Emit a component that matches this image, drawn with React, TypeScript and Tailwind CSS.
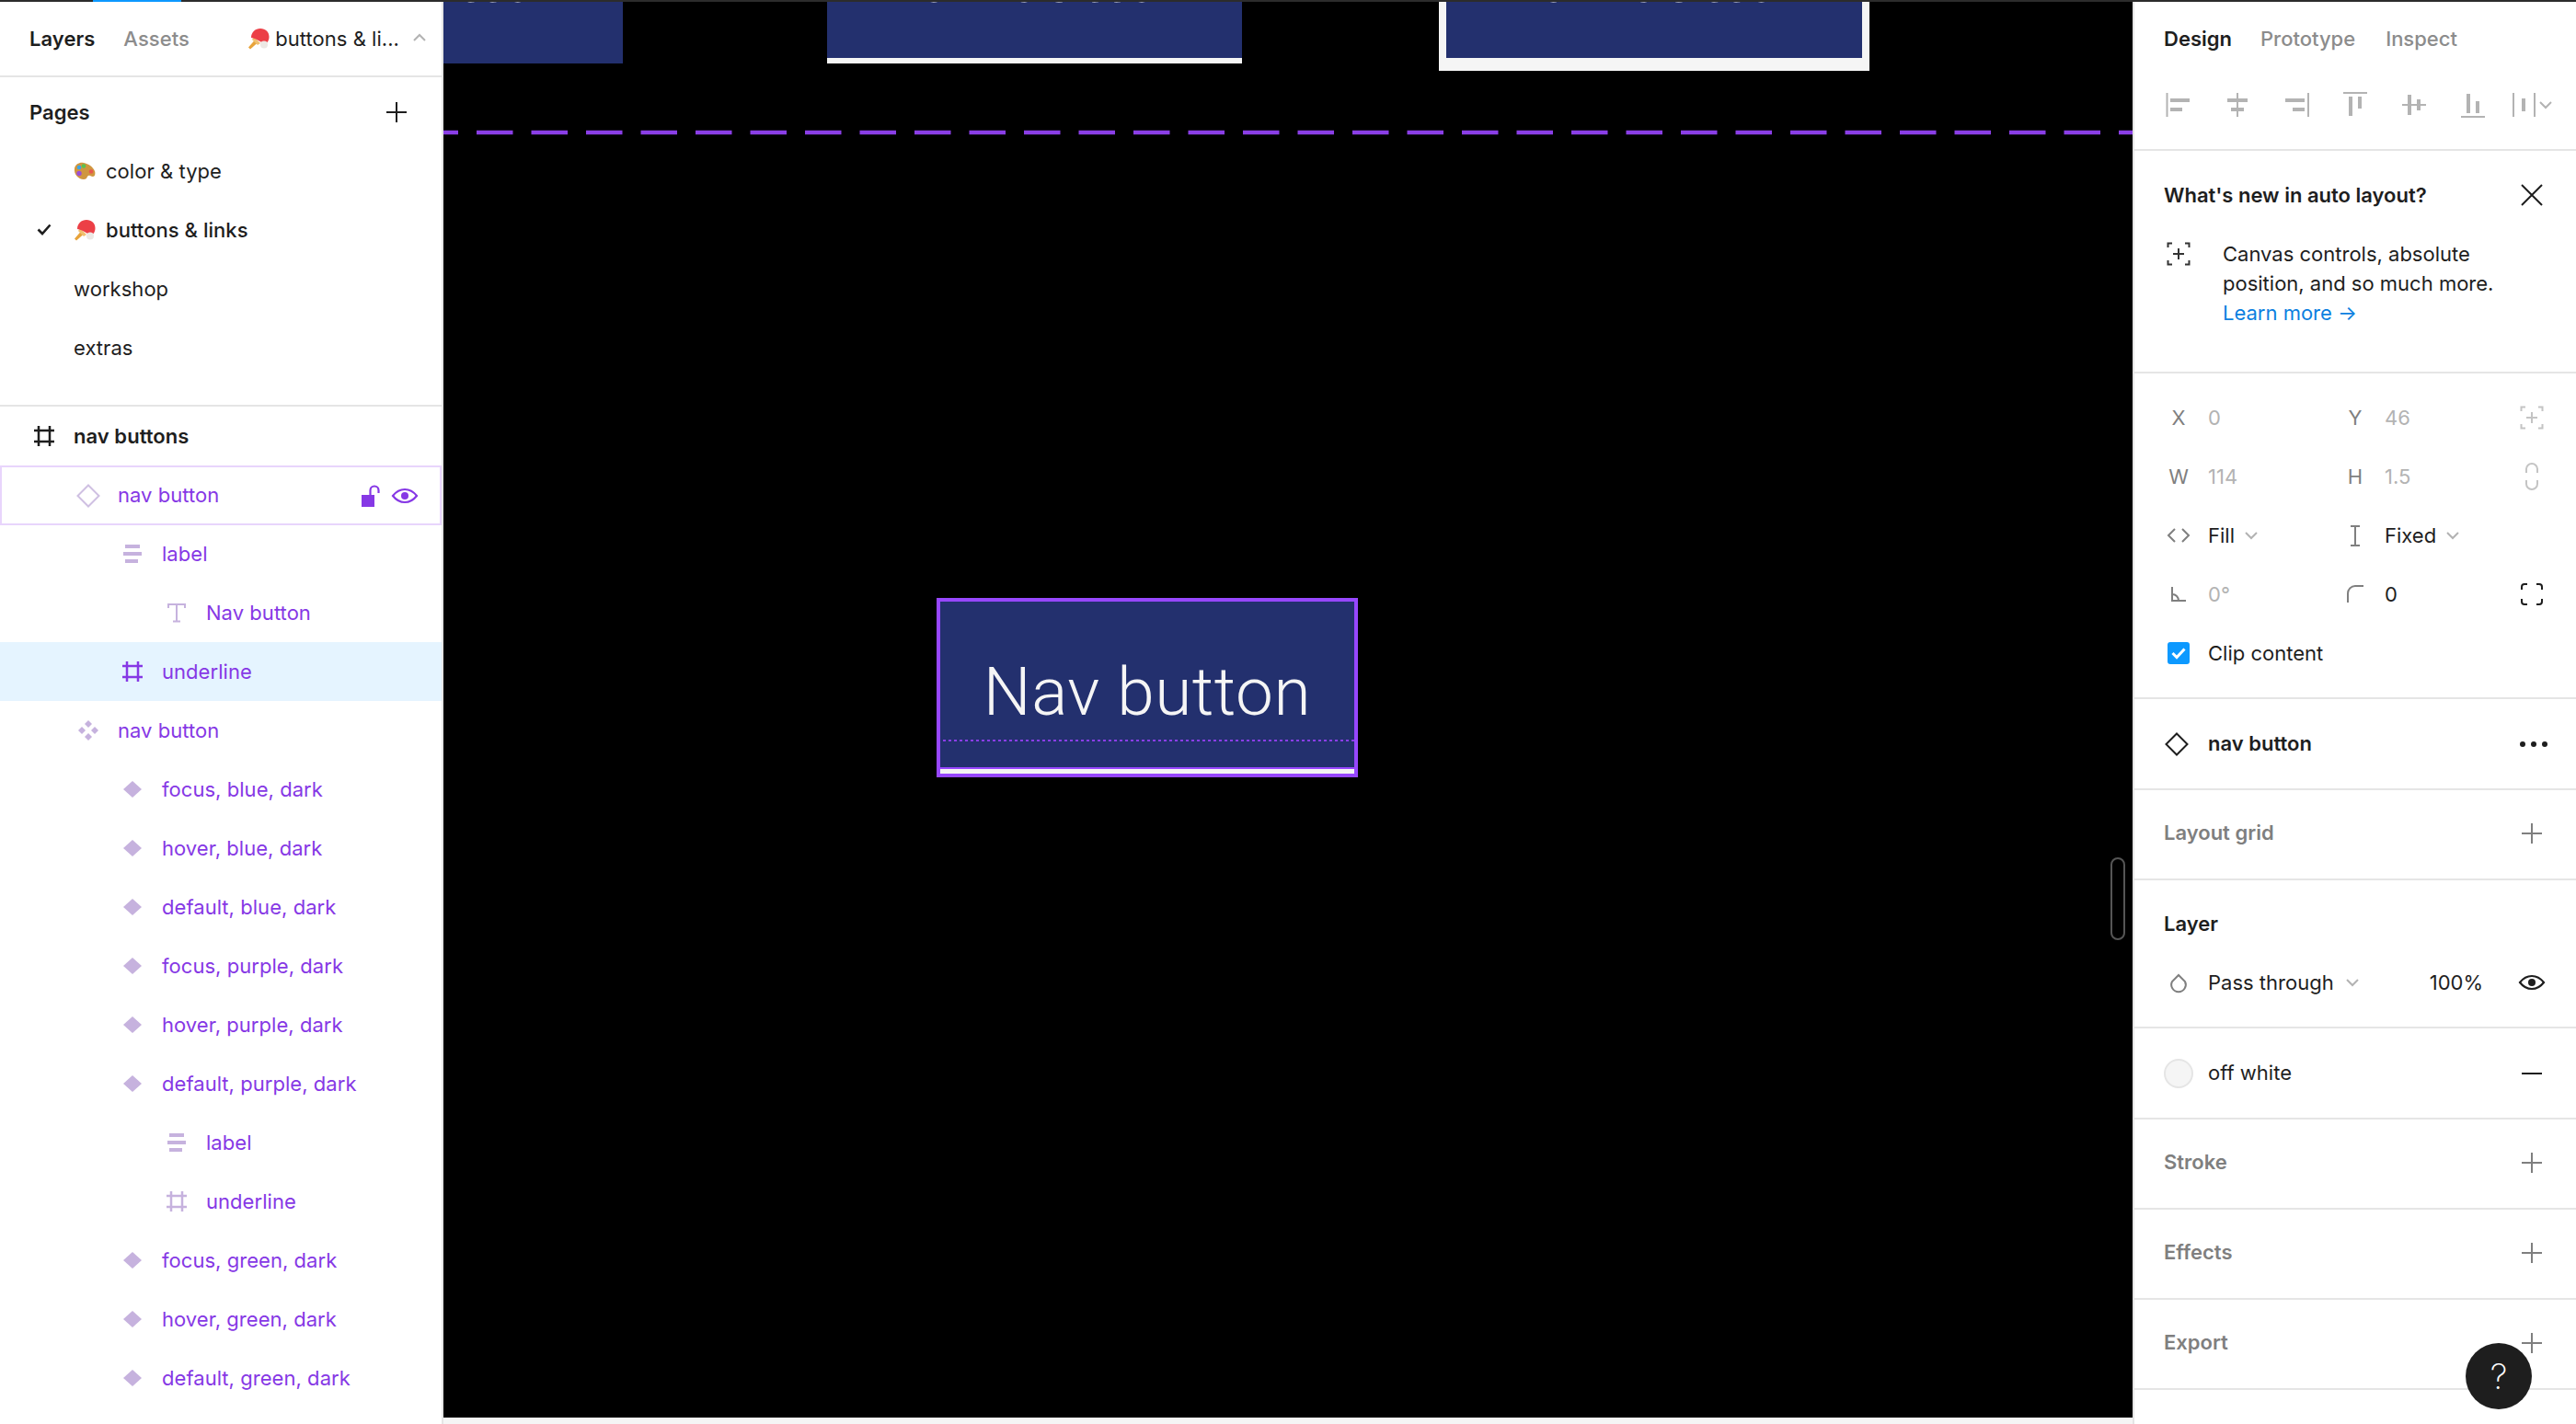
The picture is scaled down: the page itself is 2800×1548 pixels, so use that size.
import type { ReactNode } from "react"

const faded = "#c6b2de"
const purple = "#8638e5"

const Icon = ({ size = 32, children, className = "" }: { size?: number; children: ReactNode; className?: string }) => (
    <svg width={size} height={size} viewBox={`0 0 ${size} ${size}`} fill="none" className={`shrink-0 ${className}`}>
        {children}
    </svg>
)

const Plus = ({ color = "#7f7f7f" }: { color?: string }) => (
    <Icon>
        <path d="M16 5v22M5 16h22" stroke={color} strokeWidth="2" />
    </Icon>
)

const Chevron = ({ up = false, className = "" }: { up?: boolean; className?: string }) => (
    <svg width="16" height="10" viewBox="0 0 16 10" fill="none" className={`shrink-0 ${className}`}>
        <path d={up ? "M2 8l6-6 6 6" : "M2 2l6 6 6-6"} stroke="#b3b3b3" strokeWidth="2" />
    </svg>
)

const Eye = ({ color }: { color: string }) => (
    <Icon>
        <path d="M3 16c3.500-4.500 8-7 13-7s9.500 2.500 13 7c-3.500 4.500-8 7-13 7s-9.500-2.500-13-7z" stroke={color} strokeWidth="2.200" />
        <circle cx="16" cy="16" r="4" fill={color} />
    </Icon>
)

const Paddle = ({ className = "" }: { className?: string }) => (
    <svg width="24" height="24" viewBox="0 0 24 24" fill="none" className={`shrink-0 ${className}`}>
        <path d="M1 21.500l7-8 3 3-8 7z" fill="#e8a33a" />
        <path d="M5 13l6 6 3-2-7-7z" fill="#f0c070" />
        <path d="M4 11C4 5 8.500 1 14 1c5.500 0 9.500 3.500 9.500 9 0 4-2 7-5 8-3.500-2-8-6-14.500-7z" fill="#ec3f46" />
        <circle cx="18" cy="18.500" r="4" fill="#ece8e4" />
    </svg>
)

const Palette = () => (
    <svg width="24" height="20" viewBox="0 0 24 20" fill="none" className="shrink-0">
        <path d="M1 7C2 2 7 0 11 1c5 1 10 4 12 9 1 3 0 6-2 6s-3-2-5-1-1 4-5 4C5 19 0 13 1 7z" fill="#d0963f" />
        <circle cx="6" cy="6" r="2.300" fill="#3aa5e8" />
        <circle cx="11" cy="4.500" r="2.300" fill="#5bc24f" />
        <circle cx="6" cy="12.500" r="2.700" fill="#9a4fd6" />
        <circle cx="19" cy="10.500" r="2.300" fill="#e8584f" />
    </svg>
)

const Hash = ({ color }: { color: string }) => (
    <Icon>
        <path d="M10 5v22M22 5v22M5 10h22M5 22h22" stroke={color} strokeWidth="2.500" />
    </Icon>
)

const BracketPlus = ({ color }: { color: string }) => (
    <Icon>
        <path d="M4.500 9V4.500H9M23 4.500h4.500V9M27.500 23v4.500H23M9 27.500H4.500V23M16 10v12M10 16h12" stroke={color} strokeWidth="2" />
    </Icon>
)

type LayerKind = "frame" | "main" | "stack" | "text" | "set" | "variant"

const LayerIcon = ({ kind, selected }: { kind: LayerKind; selected?: boolean }) => {
    if (kind === "frame") return <Hash color={selected ? purple : faded} />
    if (kind === "main") return (
        <Icon>
            <path d="M16 4.500L27.500 16 16 27.500 4.500 16z" stroke="#cfc0e2" strokeWidth="2" />
        </Icon>
    )
    if (kind === "stack") return (
        <Icon>
            <path d="M8 6h16v4H8zM6 14h20v4H6zM8 22h14v4H8z" fill={faded} />
        </Icon>
    )
    if (kind === "text") return (
        <Icon>
            <path d="M7 11V7h18v4M16 7v19M12 25.500h8" stroke={faded} strokeWidth="2" />
        </Icon>
    )
    if (kind === "set") return (
        <Icon>
            <path d="M16 5l4 4-4 4-4-4zM9 12l4 4-4 4-4-4zM23 12l4 4-4 4-4-4zM16 19l4 4-4 4-4-4z" fill={faded} />
        </Icon>
    )
    return (
        <Icon>
            <path d="M16 7l10 9-10 9-10-9z" fill={faded} />
        </Icon>
    )
}

const layers: { name: string; kind: LayerKind; depth: string }[] = [
    { name: "label", kind: "stack", depth: "pl-[128px]" },
    { name: "Nav button", kind: "text", depth: "pl-[176px]" },
    { name: "underline", kind: "frame", depth: "pl-[128px]" },
    { name: "nav button", kind: "set", depth: "pl-[80px]" },
    { name: "focus, blue, dark", kind: "variant", depth: "pl-[128px]" },
    { name: "hover, blue, dark", kind: "variant", depth: "pl-[128px]" },
    { name: "default, blue, dark", kind: "variant", depth: "pl-[128px]" },
    { name: "focus, purple, dark", kind: "variant", depth: "pl-[128px]" },
    { name: "hover, purple, dark", kind: "variant", depth: "pl-[128px]" },
    { name: "default, purple, dark", kind: "variant", depth: "pl-[128px]" },
    { name: "label", kind: "stack", depth: "pl-[176px]" },
    { name: "underline", kind: "frame", depth: "pl-[176px]" },
    { name: "focus, green, dark", kind: "variant", depth: "pl-[128px]" },
    { name: "hover, green, dark", kind: "variant", depth: "pl-[128px]" },
    { name: "default, green, dark", kind: "variant", depth: "pl-[128px]" },
]

const LeftPanel = () => (
    <aside className="flex w-[482px] shrink-0 flex-col overflow-hidden border-r-2 border-[#e5e5e5] bg-white text-[22px] tracking-[0.002em] text-[#1e1e1e]">
        <div className="flex h-[82px] shrink-0 items-center border-b-2 border-[#e5e5e5] pl-8 pr-[16px]">
            <span className="font-semibold">Layers</span>
            <span className="ml-[31px] font-medium text-[#8c8c8c]">Assets</span>
            <Paddle className="ml-auto" />
            <span className="ml-[6px]">buttons &amp; li...</span>
            <Chevron up className="ml-[14px] mb-[2px]" />
        </div>
        <div className="h-[358px] shrink-0 border-b-2 border-[#e5e5e5]">
            <div className="flex h-[70px] items-center justify-between pl-8 pr-[33px] pt-[6px] font-semibold">
                <span>Pages</span>
                <Plus color="#1e1e1e" />
            </div>
            <div className="flex h-16 items-center gap-[11px] pl-[80px]">
                <Palette />
                <span>color &amp; type</span>
            </div>
            <div className="relative flex h-16 items-center gap-[11px] pl-[80px] font-medium">
                <svg width="16" height="13" viewBox="0 0 16 13" fill="none" className="absolute left-[40px] top-[25px]">
                    <path d="M1.500 6.500l4.500 4.500 8.500-9.500" stroke="#1e1e1e" strokeWidth="2.600" />
                </svg>
                <Paddle />
                <span>buttons &amp; links</span>
            </div>
            <div className="flex h-16 items-center pl-[80px]">workshop</div>
            <div className="flex h-16 items-center pl-[80px]">extras</div>
        </div>
        <div className="flex h-16 shrink-0 items-center gap-4 pl-8 font-semibold">
            <Hash color="#1e1e1e" />
            <span>nav buttons</span>
        </div>
        <div className="-mb-px flex h-[65px] shrink-0 items-center gap-4 border-2 border-[#e8d5fc] pl-[78px] pr-[22px]" style={{ color: purple }}>
            <LayerIcon kind="main" />
            <span>nav button</span>
            <svg width="22" height="24" viewBox="0 0 22 24" fill="none" className="ml-auto">
                <path d="M1 11h14v13H1z" fill={purple} />
                <path d="M10.500 11V6a4.500 4.500 0 0 1 9 0v3" stroke={purple} strokeWidth="2.200" />
            </svg>
            <div className="-ml-[6px]"><Eye color={purple} /></div>
        </div>
        <div className="flex-1 overflow-hidden" style={{ color: purple }}>
            {layers.map((l, i) => (
                <div key={i} className={`flex h-16 items-center gap-4 ${l.depth} ${i === 2 ? "bg-[#e5f4ff]" : ""}`}>
                    <LayerIcon kind={l.kind} selected={i === 2} />
                    <span>{l.name}</span>
                </div>
            ))}
        </div>
    </aside>
)

const navText = "font-['Roboto',sans-serif] text-[73px] font-light tracking-[0.007em] text-[#f5f5f5] whitespace-nowrap leading-none"

const Canvas = () => (
    <div className="flex min-w-0 flex-1 flex-col">
        <main className="relative flex-1 overflow-hidden bg-black">
            <div className="absolute left-0 top-0 h-[67px] w-[195px] overflow-hidden bg-[#23306e]">
                <span className={`absolute left-[-214px] top-[-61px] ${navText}`}>Nav button</span>
            </div>
            <div className="absolute left-[417px] top-0 flex h-[67px] w-[451px] justify-center overflow-hidden border-b-[6px] border-[#f5f5f5] bg-[#23306e]">
                <span className={`mt-[-61px] ${navText}`}>Nav button</span>
            </div>
            <div className="absolute left-[1082px] top-0 flex h-[75px] w-[468px] justify-center overflow-hidden border-x-8 border-b-[14px] border-[#f5f5f5] bg-[#23306e]">
                <span className={`mt-[-61px] ${navText}`}>Nav button</span>
            </div>
            <svg width="1836" height="6" className="absolute left-0 top-[139px]">
                <line x1="0" y1="3" x2="1836" y2="3" stroke="#8a3ee6" strokeWidth="4.500" strokeDasharray="39.5 20" strokeDashoffset="23.5" />
            </svg>
            <div className="absolute left-[536px] top-[648px] flex h-[195px] w-[458px] flex-col border-4 border-[#9747ff] bg-[#23306e]">
                <div className="flex flex-1 justify-center">
                    <span className={`mt-[62px] ${navText}`}>Nav button</span>
                </div>
                <svg width="450" height="2" className="absolute left-[3px] top-[150px]">
                    <line x1="0" y1="1" x2="450" y2="1" stroke="#8a3ee6" strokeWidth="2" strokeDasharray="3 3" />
                </svg>
                <div className="h-[2px] bg-[#9747ff]" />
                <div className="h-[5px] bg-[#f5f5f5]" />
            </div>
            <div className="absolute left-[1812px] top-[930px] h-[90px] w-[16px] rounded-full border-2 border-[#555555]" />
        </main>
        <div className="h-[7px] shrink-0 bg-[#f5f5f5]" />
    </div>
)

const AlignIcons = () => (
    <div className="flex h-[32px] items-center gap-8 pl-8">
        <Icon>
            <path d="M2.500 3h2v26h-2zM7 9h21v4H7zM7 19h13v4H7z" fill="#b3b3b3" />
        </Icon>
        <Icon>
            <path d="M15 3h2v26h-2zM5 9h22v4H5zM9 19h14v4H9z" fill="#b3b3b3" />
        </Icon>
        <Icon>
            <path d="M28 3h2v26h-2zM4 9h21v4H4zM12 19h13v4H12z" fill="#b3b3b3" />
        </Icon>
        <Icon>
            <path d="M3 2h26v2H3zM9 7h4v21H9zM19 7h4v13h-4z" fill="#b3b3b3" />
        </Icon>
        <Icon>
            <path d="M3 15h26v2H3zM9 5h4v22H9zM19 10h4v12h-4z" fill="#b3b3b3" />
        </Icon>
        <Icon>
            <path d="M3 28h26v2H3zM9 4h4v21H9zM19 12h4v13h-4z" fill="#b3b3b3" />
        </Icon>
        <svg width="46" height="32" viewBox="0 0 46 32" fill="none" className="-ml-[6px] shrink-0">
            <path d="M1 3h2v26H1zM24 3h2v26h-2zM11 9h4v14h-4z" fill="#b3b3b3" />
            <path d="M31 13l6 6 6-6" stroke="#b3b3b3" strokeWidth="2" />
        </svg>
    </div>
)

const PropRow = ({ a, b, c }: { a: ReactNode; b: ReactNode; c?: ReactNode }) => (
    <div className="grid h-16 grid-cols-[192px_192px_32px] items-center pl-8">
        <div className="flex items-center gap-4">{a}</div>
        <div className="flex items-center gap-4">{b}</div>
        {c}
    </div>
)

const Label = ({ children }: { children: ReactNode }) => (
    <span className="flex w-8 shrink-0 justify-center text-[#7f7f7f]">{children}</span>
)

const Muted = ({ children }: { children: ReactNode }) => <span className="text-[#b3b3b3]">{children}</span>

const AddSection = ({ title }: { title: string }) => (
    <div className="flex h-[98px] shrink-0 items-center justify-between border-b-2 border-[#e5e5e5] pb-[3px] pl-8 pr-[32px] font-semibold text-[#7f7f7f]">
        <span>{title}</span>
        <Plus />
    </div>
)

const RightPanel = () => (
    <aside className="flex w-[482px] shrink-0 flex-col overflow-hidden border-l-2 border-[#e5e5e5] bg-white text-[22px] text-[#1e1e1e]">
        <div className="h-[162px] shrink-0 border-b-2 border-[#e5e5e5]">
            <div className="flex h-[80px] items-center pl-8 font-medium">
                <span className="font-semibold">Design</span>
                <span className="ml-[31px] text-[#8c8c8c]">Prototype</span>
                <span className="ml-[33px] text-[#8c8c8c]">Inspect</span>
            </div>
            <div className="mt-[16px]"><AlignIcons /></div>
        </div>
        <div className="h-[242px] shrink-0 border-b-2 border-[#e5e5e5] pl-8">
            <div className="flex h-[96px] items-center justify-between pr-[32px] font-semibold">
                <span>What's new in auto layout?</span>
                <svg width="32" height="32" viewBox="0 0 32 32" fill="none">
                    <path d="M5 5l22 22M27 5L5 27" stroke="#1e1e1e" strokeWidth="2" />
                </svg>
            </div>
            <div className="flex gap-[32px]">
                <BracketPlus color="#333333" />
                <div className="leading-8">
                    Canvas controls, absolute
                    <br />
                    position, and so much more.
                    <br />
                    <span className="text-[#0c7fe0]">Learn more →</span>
                </div>
            </div>
        </div>
        <div className="h-[354px] shrink-0 border-b-2 border-[#e5e5e5] pt-[16px]">
            <PropRow
                a={<><Label>X</Label><Muted>0</Muted></>}
                b={<><Label>Y</Label><Muted>46</Muted></>}
                c={<BracketPlus color="#c4c4c4" />}
            />
            <PropRow
                a={<><Label>W</Label><Muted>114</Muted></>}
                b={<><Label>H</Label><Muted>1.5</Muted></>}
                c={
                    <Icon>
                        <path d="M10 12V8a6 6 0 0 1 12 0v4M10 20v4a6 6 0 0 0 12 0v-4" stroke="#c4c4c4" strokeWidth="2" />
                    </Icon>
                }
            />
            <PropRow
                a={
                    <>
                        <Icon>
                            <path d="M12 9l-7 7 7 7M20 9l7 7-7 7" stroke="#7f7f7f" strokeWidth="2" />
                        </Icon>
                        <span>Fill</span>
                        <Chevron className="-ml-[6px]" />
                    </>
                }
                b={
                    <>
                        <Icon>
                            <path d="M11 6h10M11 27h10M16 6v21" stroke="#7f7f7f" strokeWidth="2" />
                        </Icon>
                        <span>Fixed</span>
                        <Chevron className="-ml-[6px]" />
                    </>
                }
            />
            <PropRow
                a={
                    <>
                        <Icon>
                            <path d="M9 8v15h15M9 16c4 0 7 3 7 7" stroke="#7f7f7f" strokeWidth="2" />
                        </Icon>
                        <Muted>0°</Muted>
                    </>
                }
                b={
                    <>
                        <Icon>
                            <path d="M8 25V15a8 8 0 0 1 8-8h9" stroke="#7f7f7f" strokeWidth="2" />
                        </Icon>
                        <span>0</span>
                    </>
                }
                c={
                    <Icon>
                        <path d="M5 11V8a3 3 0 0 1 3-3h3M21 5h3a3 3 0 0 1 3 3v3M27 21v3a3 3 0 0 1-3 3h-3M11 27H8a3 3 0 0 1-3-3v-3" stroke="#1e1e1e" strokeWidth="2" />
                    </Icon>
                }
            />
            <div className="flex h-16 items-center gap-4 pl-8">
                <svg width="32" height="32" viewBox="0 0 32 32" fill="none" className="shrink-0">
                    <rect x="4" y="4" width="24" height="24" rx="3" fill="#0d99ff" />
                    <path d="M9.500 16l4.500 4.500 8.500-9" stroke="white" strokeWidth="3" />
                </svg>
                <span>Clip content</span>
            </div>
        </div>
        <div className="flex h-[99px] shrink-0 items-center gap-4 border-b-2 border-[#e5e5e5] pl-8 pr-[30px] font-semibold">
            <Icon>
                <path d="M14 4.500L25.500 16 14 27.500 2.500 16z" stroke="#1e1e1e" strokeWidth="2" />
            </Icon>
            <span>nav button</span>
            <svg width="32" height="8" viewBox="0 0 32 8" className="ml-auto" fill="#1e1e1e">
                <circle cx="4" cy="4" r="3" />
                <circle cx="16" cy="4" r="3" />
                <circle cx="28" cy="4" r="3" />
            </svg>
        </div>
        <AddSection title="Layout grid" />
        <div className="h-[161px] shrink-0 border-b-2 border-[#e5e5e5] pl-8 pr-[32px]">
            <div className="flex h-[80px] items-end pb-[16px] font-semibold">Layer</div>
            <div className="flex h-[62px] items-center gap-4">
                <Icon>
                    <path d="M16 8l7 7a7.800 7.800 0 1 1-14 0z" stroke="#7f7f7f" strokeWidth="2" />
                </Icon>
                <span>Pass through</span>
                <Chevron className="-ml-[4px]" />
                <span className="ml-auto mr-[37px]">100%</span>
                <div className="-ml-[16px]"><Eye color="#1e1e1e" /></div>
            </div>
        </div>
        <div className="flex h-[99px] shrink-0 items-center gap-4 border-b-2 border-[#e5e5e5] pl-8 pr-[32px]">
            <div className="h-8 w-8 shrink-0 rounded-full border-2 border-[#e5e5e5] bg-[#f5f5f5]" />
            <span>off white</span>
            <svg width="32" height="32" viewBox="0 0 32 32" className="ml-auto">
                <path d="M5 16h22" stroke="#1e1e1e" strokeWidth="2" />
            </svg>
        </div>
        <AddSection title="Stroke" />
        <AddSection title="Effects" />
        <AddSection title="Export" />
        <div className="fixed left-[2680px] top-[1460px] flex h-[72px] w-[72px] items-center justify-center rounded-full bg-[#1e1e1e] text-[38px] font-extralight text-white">
            ?
        </div>
    </aside>
)

export default function App() {
    return (
        <div className="flex h-[1548px] w-[2800px] flex-col overflow-hidden bg-white font-['Inter',sans-serif]">
            <div className="h-[2px] shrink-0 bg-[#2c2c2c] pl-[101px]">
                <div className="h-[2px] w-[96px] bg-[#0d99ff]" />
            </div>
            <div className="flex min-h-0 flex-1">
                <LeftPanel />
                <Canvas />
                <RightPanel />
            </div>
        </div>
    )
}
